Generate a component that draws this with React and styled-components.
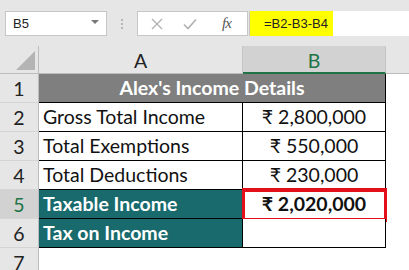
import React from 'react'
import styled, { createGlobalStyle } from 'styled-components'

const Global = createGlobalStyle`
  html, body {
    margin: 0;
    padding: 0;
    background: #ffffff;
  }
  body {
    width: 409px;
    height: 270px;
    overflow: hidden;
  }
`

const Sheet = styled.div`
  width: 409px;
  height: 270px;
  overflow: hidden;
  background: #e6e6e6;
`

const FormulaBar = styled.div`
  height: 46px;
  display: flex;
  align-items: flex-start;
  padding: 11px 0 0 5px;
  box-sizing: border-box;
  font-family: 'Liberation Sans', Arial, sans-serif;
  font-size: 13px;
  color: #222;
`

const NameBox = styled.div`
  width: 102px;
  height: 25px;
  box-sizing: border-box;
  background: #fff;
  border: 1px solid #c6c6c6;
  display: flex;
  align-items: center;
  justify-content: space-between;
  padding: 0 7px 0 7px;
`

const Caret = styled.span`
  width: 0;
  height: 0;
  border-left: 4px solid transparent;
  border-right: 4px solid transparent;
  border-top: 4px solid #777;
  margin-top: -3px;
`

const Grip = styled.div`
  width: 30px;
  height: 25px;
  display: flex;
  flex-direction: column;
  align-items: center;
  justify-content: center;
  gap: 2px;
  span {
    width: 2px;
    height: 2px;
    background: #b4b4b4;
  }
`

const Buttons = styled.div`
  width: 111px;
  height: 25px;
  box-sizing: border-box;
  background: #fff;
  border: 1px solid #c6c6c6;
  display: flex;
  align-items: center;
  padding: 0 0 0 13px;
  gap: 20px;
`

const Fx = styled.span`
  font-family: 'Liberation Serif', 'Times New Roman', serif;
  font-style: italic;
  font-size: 15px;
  color: #555;
  margin-left: 5px;
  letter-spacing: -1px;
`

const Input = styled.div`
  flex: 1;
  height: 25px;
  margin-left: 1px;
  background: #fff;
  display: flex;
`

const Highlight = styled.div`
  background: #ffff00;
  width: 84px;
  height: 25px;
  display: flex;
  align-items: center;
  padding-left: 14px;
  box-sizing: border-box;
  border-left: 1px solid #c6c6c6;
`

const Grid = styled.div`
  display: grid;
  grid-template-columns: 39px 204px 143px 1fr;
  grid-template-rows: 28px repeat(7, 29px);
  font-family: Lato, 'Noto Sans', sans-serif;
  font-size: 19.5px;
  color: #111;
  background: #fff;
`

const Corner = styled.div`
  background: #e6e6e6;
  border-right: 1px solid #bcbcbc;
  border-bottom: 1px solid #bcbcbc;
  display: flex;
  align-items: flex-end;
  justify-content: flex-end;
  padding: 0 3px 3px 0;
`

const ColHead = styled.div`
  background: ${p => (p.$active ? '#d2d2d2' : '#e6e6e6')};
  color: ${p => (p.$active ? '#217346' : '#222')};
  border-right: 1px solid #c4c4c4;
  border-bottom: ${p => (p.$active ? '2px solid #217346' : '1px solid #bcbcbc')};
  display: flex;
  align-items: center;
  justify-content: center;
  padding-top: 2px;
`

const RowHead = styled.div`
  background: ${p => (p.$active ? '#d2d2d2' : '#e6e6e6')};
  color: ${p => (p.$active ? '#217346' : '#222')};
  border-right: 1px solid #bcbcbc;
  border-bottom: 1px solid #d4d4d4;
  display: flex;
  align-items: center;
  justify-content: center;
  line-height: 29px;
`

const Cell = styled.div`
  position: relative;
  box-sizing: border-box;
  line-height: 28px;
  white-space: nowrap;
  padding: 0 4px;
  text-align: ${p => p.$align || 'left'};
  font-weight: ${p => (p.$bold ? 700 : 400)};
  background: ${p => p.$fill || '#fff'};
  color: ${p => (p.$light ? '#fff' : '#111')};
  border-right: ${p => (p.$edge ? '1px solid #000' : 'none')};
  border-bottom: ${p => (p.$line ? '1px solid #000' : 'none')};
`

const Title = styled(Cell)`
  grid-column: span 2;
  text-align: center;
  background: #7f7f7f;
  color: #fff;
  font-weight: 700;
  border-right: 1px solid #000;
  border-bottom: 1px solid #000;
`

const Blank = styled.div`
  background: #fff;
`

const HeadFill = styled.div`
  background: #e6e6e6;
  border-bottom: 1px solid #bcbcbc;
`

const Marker = styled.div`
  position: absolute;
  left: -1px;
  top: -2px;
  right: -2px;
  bottom: -4px;
  border: 3px solid #e3101b;
  border-top-width: 4px;
  border-bottom-width: 4px;
  pointer-events: none;
`

const rows = [
  { label: 'Gross Total Income', value: '₹ 2,800,000' },
  { label: 'Total Exemptions', value: '₹ 550,000' },
  { label: 'Total Deductions', value: '₹ 230,000' },
  { label: 'Taxable Income', value: '₹ 2,020,000', teal: true, selected: true },
  { label: 'Tax on Income', value: '', teal: true },
]

export default function App() {
  return (
    <Sheet>
      <Global />
      <FormulaBar>
        <NameBox>
          B5
          <Caret />
        </NameBox>
        <Grip>
          <span />
          <span />
          <span />
        </Grip>
        <Buttons>
          <svg width="12" height="12" viewBox="0 0 12 12">
            <path d="M1 1 L11 11 M11 1 L1 11" stroke="#b0b0b0" strokeWidth="1.3" fill="none" />
          </svg>
          <svg width="14" height="12" viewBox="0 0 14 12">
            <path d="M1 6.5 L5 10.5 L13 1.5" stroke="#b0b0b0" strokeWidth="1.6" fill="none" />
          </svg>
          <Fx>fx</Fx>
        </Buttons>
        <Input>
          <Highlight>=B2-B3-B4</Highlight>
        </Input>
      </FormulaBar>

      <Grid>
        <Corner>
          <svg width="19" height="19" viewBox="0 0 19 19">
            <polygon points="19,0 19,19 0,19" fill="#b4b4b4" />
          </svg>
        </Corner>
        <ColHead>A</ColHead>
        <ColHead $active>B</ColHead>
        <HeadFill />

        <RowHead>1</RowHead>
        <Title>Alex's Income Details</Title>
        <Blank />

        {rows.map((r, i) => (
          <React.Fragment key={r.label}>
            <RowHead $active={r.selected}>{i + 2}</RowHead>
            <Cell
              $edge
              $line
              $bold={r.teal}
              $light={r.teal}
              $fill={r.teal ? '#186a6c' : undefined}
            >
              {r.label}
            </Cell>
            <Cell $edge $line $align="center" $bold={r.selected}>
              {r.value}
              {r.selected && <Marker />}
            </Cell>
            <Blank />
          </React.Fragment>
        ))}

        <RowHead>7</RowHead>
        <Blank />
        <Blank />
        <Blank />
      </Grid>
    </Sheet>
  )
}
